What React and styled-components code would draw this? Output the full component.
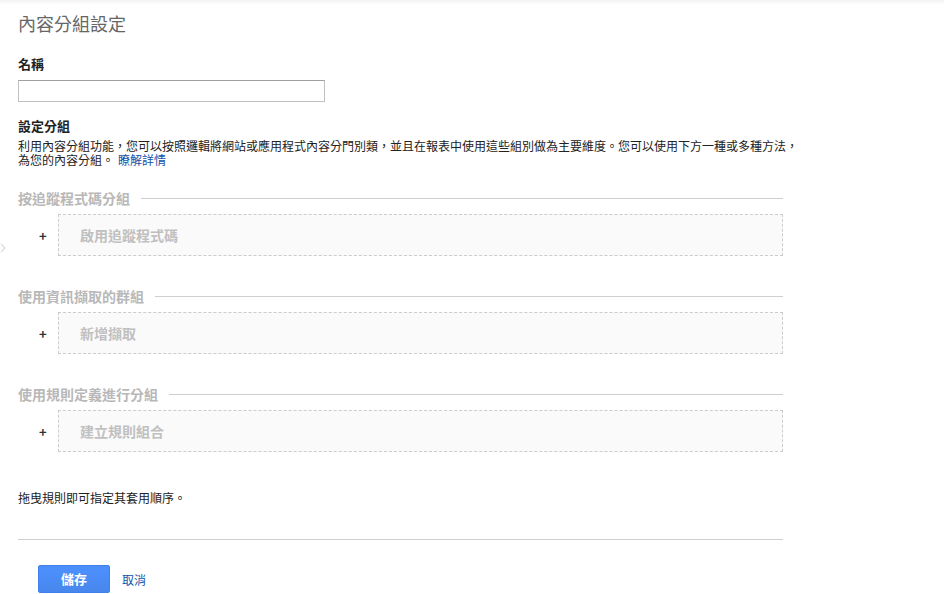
import styled, { createGlobalStyle } from "styled-components";

const GlobalStyle = createGlobalStyle`
    html, body {
        margin: 0;
        padding: 0;
        background: #fff;
    }
    body {
        font-family: "Noto Sans CJK TC", "Liberation Sans", Arial, sans-serif;
        font-size: 12px;
        color: #222;
    }
`

const Page = styled.div`
    position: relative;
    width: 944px;
    height: 594px;
    overflow: hidden;
`
const TopShadow = styled.div`
    height: 5px;
    background: linear-gradient(#f2f2f2, #fff);
    margin-bottom: -5px;
`
const Content = styled.div`
    padding: 0 18px;
    width: 765px;
`
const Title = styled.h1`
    margin: 11px 0 0;
    font-size: 18px;
    line-height: 24px;
    font-weight: 400;
    color: #666;
`
const Label = styled.div`
    margin-top: ${(p) => p.$top}px;
    font-size: 13px;
    line-height: 16px;
    font-weight: 700;
    color: #222;
`
const NameInput = styled.input`
    display: block;
    box-sizing: border-box;
    margin-top: 8px;
    width: 307px;
    height: 22px;
    border: 1px solid #c0c0c0;
    border-top-color: #a0a0a0;
    padding: 0 4px;
    font: inherit;
    outline: none;
`
const Desc = styled.p`
    margin: 5px 0 0;
    width: 800px;
    font-size: 12px;
    line-height: 14px;
    color: #222;
    text-spacing-trim: space-all;
`
const Link = styled.a`
    color: #1155aa;
    text-decoration: none;
    cursor: pointer;
    margin-left: ${(p) => p.$gap || 0}px;
`
const Section = styled.section`
    margin-top: ${(p) => p.$top}px;
`
const SectionHead = styled.div`
    display: flex;
    align-items: center;
    gap: 11px;
    font-size: 14px;
    line-height: 16px;
    font-weight: 700;
    color: #b8b8b8;
    &::after {
        content: "";
        flex: 1;
        height: 1px;
        background: #cfcfcf;
    }
`
const Row = styled.div`
    display: flex;
    margin-top: 8px;
`
const Plus = styled.span`
    width: 40px;
    box-sizing: border-box;
    padding-left: 21px;
    display: flex;
    align-items: center;
    font-size: 13px;
    font-weight: 700;
    color: #333;
`
const DropBox = styled.div`
    flex: 1;
    box-sizing: border-box;
    height: 42px;
    display: flex;
    align-items: center;
    padding-left: 21px;
    background: #fafafa;
    border: 1px dashed #cccccc;
    font-size: 14px;
    font-weight: 700;
    color: #c0c0c0;
`
const Note = styled.p`
    margin: 38px 0 0;
    font-size: 12px;
    line-height: 16px;
`
const Divider = styled.hr`
    margin: 33px 0 0;
    border: none;
    border-top: 1px solid #cfcfcf;
`
const Actions = styled.div`
    display: flex;
    align-items: center;
    gap: 12px;
    margin-top: 25px;
    padding-left: 20px;
`
const SaveButton = styled.button`
    width: 72px;
    height: 28px;
    padding-bottom: 2px;
    border: 1px solid #3f80ec;
    border-radius: 2px;
    background: linear-gradient(#4d90fe, #4787ed);
    color: #fff;
    font: inherit;
    font-size: 13px;
    font-weight: 700;
    cursor: pointer;
`
const SideArrow = styled.svg`
    position: absolute;
    left: 0;
    top: 243px;
`

const groups = [
    { title: "按追蹤程式碼分組", action: "啟用追蹤程式碼", top: 23 },
    { title: "使用資訊擷取的群組", action: "新增擷取", top: 32 },
    { title: "使用規則定義進行分組", action: "建立規則組合", top: 32 },
];

const App = () => {
    return (
        <Page>
            <GlobalStyle />
            <TopShadow />
            <SideArrow width="6" height="10" viewBox="0 0 6 10">
                <path d="M1 1 L5 5 L1 9" fill="none" stroke="#e0e0e0" strokeWidth="1.5" />
            </SideArrow>
            <Content>
                <Title>內容分組設定</Title>
                <Label $top={21}>名稱</Label>
                <NameInput />
                <Label $top={16}>設定分組</Label>
                <Desc>
                    利用內容分組功能，您可以按照邏輯將網站或應用程式內容分門別類，並且在報表中使用這些組別做為主要維度。您可以使用下方一種或多種方法，<br />
                    為您的內容分組。<Link $gap={4}>瞭解詳情</Link>
                </Desc>
                {groups.map((g) => (
                    <Section key={g.title} $top={g.top}>
                        <SectionHead>{g.title}</SectionHead>
                        <Row>
                            <Plus>+</Plus>
                            <DropBox>{g.action}</DropBox>
                        </Row>
                    </Section>
                ))}
                <Note>拖曳規則即可指定其套用順序。</Note>
                <Divider />
                <Actions>
                    <SaveButton>儲存</SaveButton>
                    <Link>取消</Link>
                </Actions>
            </Content>
        </Page>
    )
}

export default App;
